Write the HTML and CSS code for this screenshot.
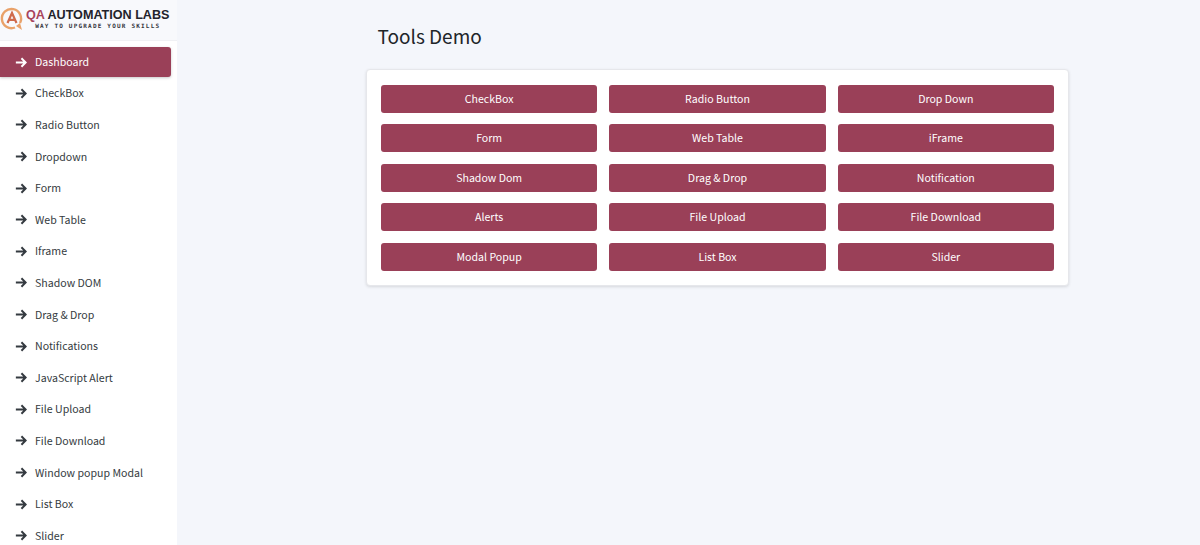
FILE: index.html
```html
<!DOCTYPE html>
<html lang="en">
<head>
<meta charset="utf-8">
<title>Tools Demo</title>
<link rel="stylesheet" href="styles.css">
</head>
<body>
<div class="app">
  <aside class="sidebar">
    <div class="brand">
      <svg class="brand-icon" viewBox="0 0 24 26" width="24" height="26">
        <path d="M15 21.5A9.6 9.6 0 1 1 20 17" fill="none" stroke="#e9a26a" stroke-width="2.4"/>
        <path d="M16 20l6 4-2-7z" fill="#e9a26a"/>
        <path d="M7.5 17l4.5-10 4.5 10M9.5 13.8h5" fill="none" stroke="#cf6a4c" stroke-width="2.2"/>
      </svg>
      <div class="brand-text">
        <div class="brand-name"><span class="brand-qa">QA</span> AUTOMATION LABS</div>
        <div class="brand-sub">WAY TO UPGRADE YOUR SKILLS</div>
      </div>
    </div>
    <nav class="nav">
      <a class="nav-item active"><svg class="arrow" viewBox="0 0 14 12"><path d="M1 6h11.5M7.5 1l5 5-5 5"/></svg>Dashboard</a>
      <a class="nav-item"><svg class="arrow" viewBox="0 0 14 12"><path d="M1 6h11.5M7.5 1l5 5-5 5"/></svg>CheckBox</a>
      <a class="nav-item"><svg class="arrow" viewBox="0 0 14 12"><path d="M1 6h11.5M7.5 1l5 5-5 5"/></svg>Radio Button</a>
      <a class="nav-item"><svg class="arrow" viewBox="0 0 14 12"><path d="M1 6h11.5M7.5 1l5 5-5 5"/></svg>Dropdown</a>
      <a class="nav-item"><svg class="arrow" viewBox="0 0 14 12"><path d="M1 6h11.5M7.5 1l5 5-5 5"/></svg>Form</a>
      <a class="nav-item"><svg class="arrow" viewBox="0 0 14 12"><path d="M1 6h11.5M7.5 1l5 5-5 5"/></svg>Web Table</a>
      <a class="nav-item"><svg class="arrow" viewBox="0 0 14 12"><path d="M1 6h11.5M7.5 1l5 5-5 5"/></svg>Iframe</a>
      <a class="nav-item"><svg class="arrow" viewBox="0 0 14 12"><path d="M1 6h11.5M7.5 1l5 5-5 5"/></svg>Shadow DOM</a>
      <a class="nav-item"><svg class="arrow" viewBox="0 0 14 12"><path d="M1 6h11.5M7.5 1l5 5-5 5"/></svg>Drag &amp; Drop</a>
      <a class="nav-item"><svg class="arrow" viewBox="0 0 14 12"><path d="M1 6h11.5M7.5 1l5 5-5 5"/></svg>Notifications</a>
      <a class="nav-item"><svg class="arrow" viewBox="0 0 14 12"><path d="M1 6h11.5M7.5 1l5 5-5 5"/></svg>JavaScript Alert</a>
      <a class="nav-item"><svg class="arrow" viewBox="0 0 14 12"><path d="M1 6h11.5M7.5 1l5 5-5 5"/></svg>File Upload</a>
      <a class="nav-item"><svg class="arrow" viewBox="0 0 14 12"><path d="M1 6h11.5M7.5 1l5 5-5 5"/></svg>File Download</a>
      <a class="nav-item"><svg class="arrow" viewBox="0 0 14 12"><path d="M1 6h11.5M7.5 1l5 5-5 5"/></svg>Window popup Modal</a>
      <a class="nav-item"><svg class="arrow" viewBox="0 0 14 12"><path d="M1 6h11.5M7.5 1l5 5-5 5"/></svg>List Box</a>
      <a class="nav-item"><svg class="arrow" viewBox="0 0 14 12"><path d="M1 6h11.5M7.5 1l5 5-5 5"/></svg>Slider</a>
    </nav>
  </aside>
  <main class="main">
    <div class="content">
      <h1 class="title">Tools Demo</h1>
      <section class="card">
        <a class="btn">CheckBox</a>
        <a class="btn">Radio Button</a>
        <a class="btn">Drop Down</a>
        <a class="btn">Form</a>
        <a class="btn">Web Table</a>
        <a class="btn">iFrame</a>
        <a class="btn">Shadow Dom</a>
        <a class="btn">Drag &amp; Drop</a>
        <a class="btn">Notification</a>
        <a class="btn">Alerts</a>
        <a class="btn">File Upload</a>
        <a class="btn">File Download</a>
        <a class="btn">Modal Popup</a>
        <a class="btn">List Box</a>
        <a class="btn">Slider</a>
      </section>
    </div>
  </main>
</div>
</body>
</html>
```
FILE: styles.css
```css
* { box-sizing: border-box; }
html, body { margin: 0; height: 100%; overflow: hidden; }
body {
  background: #f4f6fb;
  color: #212529;
  font-family: "Noto Sans CJK JP", "Noto Sans", sans-serif;
  font-size: 10.6px;
}
.app { display: flex; height: 545px; overflow: hidden; }
.sidebar {
  width: 177px;
  flex: none;
  background: #fff;
  height: 545px;
  overflow: hidden;
}
.brand {
  height: 41px;
  display: flex;
  align-items: center;
  gap: 2px;
  padding: 0 0 5px 0;
  border-bottom: 1px solid #f0f1f4;
  background: #f8f9fc;
}
.brand-icon { flex: none; margin-top: 3px; }
.brand-text { white-space: nowrap; margin-top: 2px; }
.brand-name {
  font-family: "Liberation Sans", sans-serif;
  font-weight: 700;
  font-size: 12.6px;
  line-height: 14px;
  color: #23232b;
}
.brand-qa { color: #a8455c; }
.brand-sub {
  font-family: "DejaVu Sans Mono", monospace;
  font-weight: 700;
  font-size: 6px;
  line-height: 8px;
  letter-spacing: 1.2px;
  text-align: center;
  color: #33343c;
}
.nav { display: flex; flex-direction: column; padding-top: 6px; }
.nav-item {
  display: flex;
  align-items: center;
  gap: 8px;
  width: 171px;
  height: 31.6px;
  padding-left: 15px;
  color: #343a40;
  line-height: 20px;
  white-space: nowrap;
}
.nav-item.active {
  background: #9a4058;
  color: #fff;
  border-radius: 0 3px 3px 0;
  box-shadow: 0 1px 3px rgba(0, 0, 0, .22);
  height: 30px;
  margin-bottom: .6px;
}
.arrow {
  width: 12px;
  height: 11px;
  fill: none;
  stroke: currentColor;
  stroke-width: 2.3;
  flex: none;
}
.main { flex: 1; min-width: 0; }
.content { width: 703px; margin-left: 189px; padding-top: 21px; }
.title {
  margin: 0 0 18px 11.5px;
  font-size: 19px;
  line-height: 30px;
  font-weight: 400;
  color: #212529;
}
.card {
  background: #fff;
  border: 1px solid #e6e7eb;
  border-radius: 4px;
  box-shadow: 0 1px 3px rgba(0, 0, 0, .12);
  height: 217px;
  padding: 15px 14px 0;
  display: grid;
  grid-template-columns: repeat(3, 1fr);
  grid-auto-rows: 27.8px;
  gap: 11.7px 12px;
}
.btn {
  background: #9a4058;
  color: #fff;
  border-radius: 3px;
  display: flex;
  align-items: center;
  justify-content: center;
  line-height: 20px;
}
```
